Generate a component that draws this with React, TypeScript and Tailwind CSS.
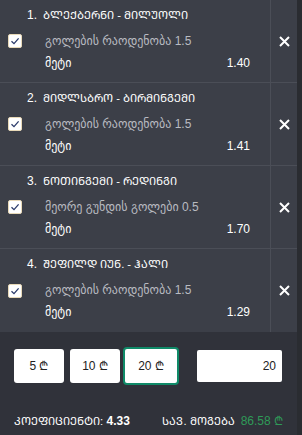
import React from "react";

function mt(s: string) {
  return Array.from(s)
    .map((c) => {
      const cp = c.codePointAt(0)!;
      if (cp >= 0x10d0 && cp <= 0x10fa) return String.fromCodePoint(cp - 0x10d0 + 0x1c90);
      return c;
    })
    .join("");
}

const rows = [
  { n: 1, title: "ბლექბერნი - მილუოლი", sub: "გოლების რაოდენობა 1.5", odd: "1.40" },
  { n: 2, title: "მიდლსბრო - ბირმინგემი", sub: "გოლების რაოდენობა 1.5", odd: "1.41" },
  { n: 3, title: "ნოთინგემი - რედინგი", sub: "მეორე გუნდის გოლები 0.5", odd: "1.70" },
  { n: 4, title: "შეფილდ იუნ. - ჰალი", sub: "გოლების რაოდენობა 1.5", odd: "1.29" },
];

function Check() {
  return (
    <div className="w-[14px] h-[14px] rounded-[2px] bg-white border border-[#e8d9b8] flex items-center justify-center">
      <svg width="10" height="10" viewBox="0 0 10 10">
        <path d="M1.5 5.2 L4 7.6 L8.6 2.4" fill="none" stroke="#2a3a6a" strokeWidth="1.3" />
      </svg>
    </div>
  );
}

function XIcon() {
  return (
    <svg width="11" height="11" viewBox="0 0 11 11">
      <path d="M1 1 L10 10 M10 1 L1 10" stroke="#ffffff" strokeWidth="2" />
    </svg>
  );
}

export default function App() {
  return (
    <div
      className="w-[302px] h-[435px] flex bg-[#2a2c31] overflow-hidden"
      style={{ fontFamily: '"Liberation Sans", "DejaVu Sans", sans-serif' }}
    >
      <div className="w-[297px] flex flex-col">
        <div className="bg-[#3c3f48]">
          {rows.map((r, i) => (
            <div
              key={r.n}
              className={`flex h-[83px] ${i < 3 ? "border-b border-[#4b4e57]" : ""}`}
            >
              <div className="w-[271px] border-r border-[#4b4e57] flex items-center">
                <div className="w-[45px] pl-[8px] flex items-center">
                  <Check />
                </div>
                <div className="flex-1 h-full flex flex-col pr-[20px]">
                  <div className="h-[30px] flex items-center -ml-[18px] text-[12px] text-white">
                    <span className="mr-[6px]">{r.n}.</span>
                    <span className="text-[11.2px]">{mt(r.title)}</span>
                  </div>
                  <div className="h-[22px] flex items-center text-[12px] text-[#b9bbc1]">
                    {r.sub}
                  </div>
                  <div className="h-[22px] flex items-center justify-between text-[12px] text-white">
                    <span>მეტი</span>
                    <span>{r.odd}</span>
                  </div>
                </div>
              </div>
              <div className="flex-1 flex items-center justify-center">
                <XIcon />
              </div>
            </div>
          ))}
        </div>
        <div className="flex-1 bg-[#30323a] flex flex-col">
          <div className="flex items-center pl-[14px] h-[67px]">
            <button className="w-[50px] h-[34px] bg-white rounded-[3px] text-[12px] text-[#222]">5 ₾</button>
            <button className="w-[50px] h-[34px] bg-white rounded-[3px] text-[12px] text-[#222] ml-[6px]">10 ₾</button>
            <button className="w-[56px] h-[38px] bg-white rounded-[4px] border-2 border-[#0f8a68] text-[12px] text-[#222] ml-[3px]">20 ₾</button>
            <div className="w-[85px] h-[32px] bg-white rounded-[2px] ml-[18px] flex items-center justify-end pr-[6px] text-[12px] text-[#222]">
              20
            </div>
          </div>
          <div className="flex items-center justify-between pl-[14px] pr-[14px] mt-[13px] text-[12px] text-white">
            <div>
              <span className="text-[11.2px]">{mt("კოეფიციენტი")}:</span> <span className="font-bold">4.33</span>
            </div>
            <div>
              <span className="text-[11.2px]">{mt("სავ. მოგება")}</span>
              <span className="ml-[6px] text-[#2f9a58]">86.58 ₾</span>
            </div>
          </div>
        </div>
      </div>
    </div>
  );
}
